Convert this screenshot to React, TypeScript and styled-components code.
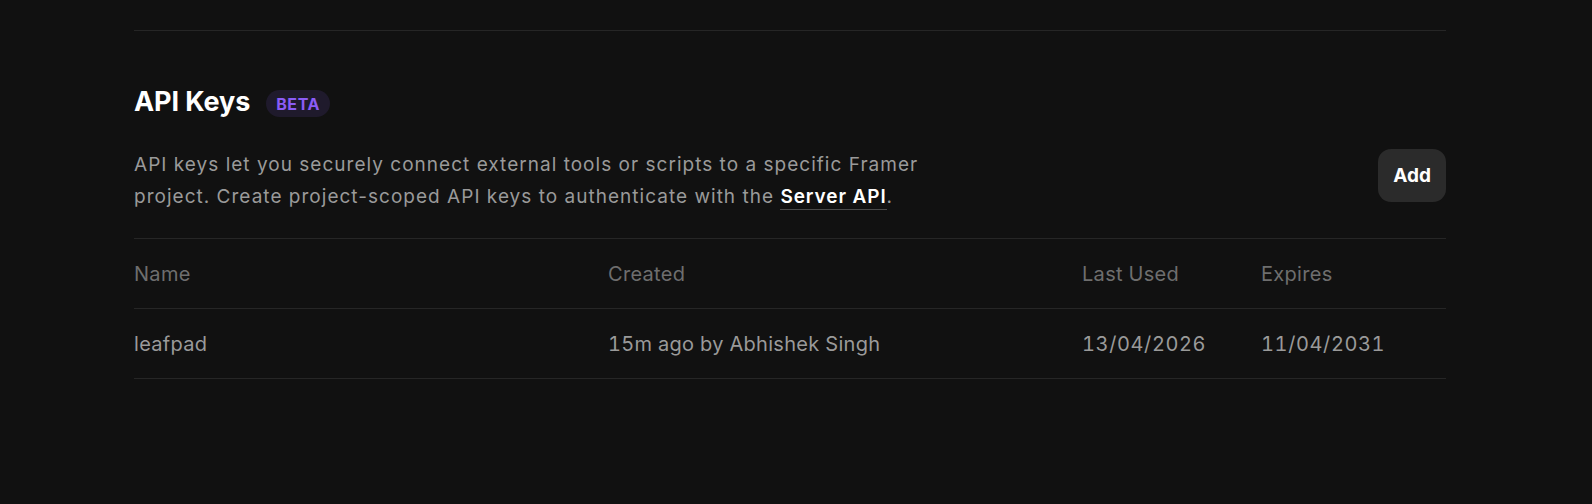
import React from "react";
import styled, { createGlobalStyle } from "styled-components";

const Global = createGlobalStyle`
  html, body {
    margin: 0;
    padding: 0;
    background: #111111;
  }
  body {
    font-family: Inter, "Noto Sans", sans-serif;
    -webkit-font-smoothing: antialiased;
  }
`;

const Page = styled.div`
  min-height: 504px;
  background: #111111;
  padding: 30px 146px 0 134px;
  box-sizing: border-box;
`;

const Divider = styled.div`
  height: 1px;
  background: #262626;
`;

const TitleRow = styled.div`
  display: flex;
  align-items: center;
  gap: 16px;
  margin-top: 55px;
`;

const Title = styled.h2`
  margin: 0;
  font-size: 27px;
  line-height: 32px;
  font-weight: 700;
  color: #ffffff;
  letter-spacing: -0.1px;
`;

const Badge = styled.span`
  display: inline-flex;
  align-items: center;
  height: 27px;
  padding: 0 10px;
  border-radius: 14px;
  background: #1f1a2c;
  color: #8b5cf6;
  font-size: 16px;
  font-weight: 700;
  letter-spacing: 0.6px;
  margin-top: 3px;
`;

const DescRow = styled.div`
  display: flex;
  justify-content: space-between;
  align-items: flex-start;
  margin-top: 31px;
`;

const Desc = styled.p`
  margin: 0;
  max-width: 815px;
  font-size: 19px;
  line-height: 32px;
  letter-spacing: 1.02px;
  color: #9a9a9a;
`;

const DocLink = styled.a`
  color: #ffffff;
  font-weight: 600;
  text-decoration: none;
  border-bottom: 1px solid #4a4a4a;
  padding-bottom: 1px;
  letter-spacing: 0.9px;
`;

const AddButton = styled.button`
  height: 53px;
  padding: 0 15px;
  border: none;
  border-radius: 13px;
  background: #2b2b2b;
  color: #ffffff;
  font-family: inherit;
  font-size: 19px;
  font-weight: 700;
  cursor: pointer;
`;

const Table = styled.div`
  margin-top: 25px;
  border-bottom: 1px solid #262626;
`;

const Row = styled.div<{ $header?: boolean }>`
  display: grid;
  grid-template-columns: 474px 474px 179px 1fr;
  align-items: center;
  height: 69px;
  border-top: 1px solid #262626;
  font-size: 20px;
  letter-spacing: 0.3px;
  font-variant-numeric: tabular-nums;
  color: ${(p) => (p.$header ? "#6e6e6e" : "#9a9a9a")};
`;

const Cell = styled.div<{ $date?: boolean }>`
  white-space: nowrap;
  letter-spacing: ${(p) => (p.$date ? "0.6px" : "inherit")};
`;

const headers = ["Name", "Created", "Last Used", "Expires"];
const keys = [["leafpad", "15m ago by Abhishek Singh", "13/04/2026", "11/04/2031"]];

export default function App() {
  return (
    <>
      <Global />
      <Page>
        <Divider />
        <TitleRow>
          <Title>API Keys</Title>
          <Badge>BETA</Badge>
        </TitleRow>
        <DescRow>
          <Desc>
            API keys let you securely connect external tools or scripts to a specific Framer
            project. Create project-scoped API keys to authenticate with the{" "}
            <DocLink href="#">Server API</DocLink>.
          </Desc>
          <AddButton>Add</AddButton>
        </DescRow>
        <Table>
          <Row $header>
            {headers.map((h) => (
              <Cell key={h}>{h}</Cell>
            ))}
          </Row>
          {keys.map((r) => (
            <Row key={r[0]}>
              {r.map((c, i) => (
                <Cell key={i} $date={i >= 2}>
                  {c}
                </Cell>
              ))}
            </Row>
          ))}
        </Table>
      </Page>
    </>
  );
}
